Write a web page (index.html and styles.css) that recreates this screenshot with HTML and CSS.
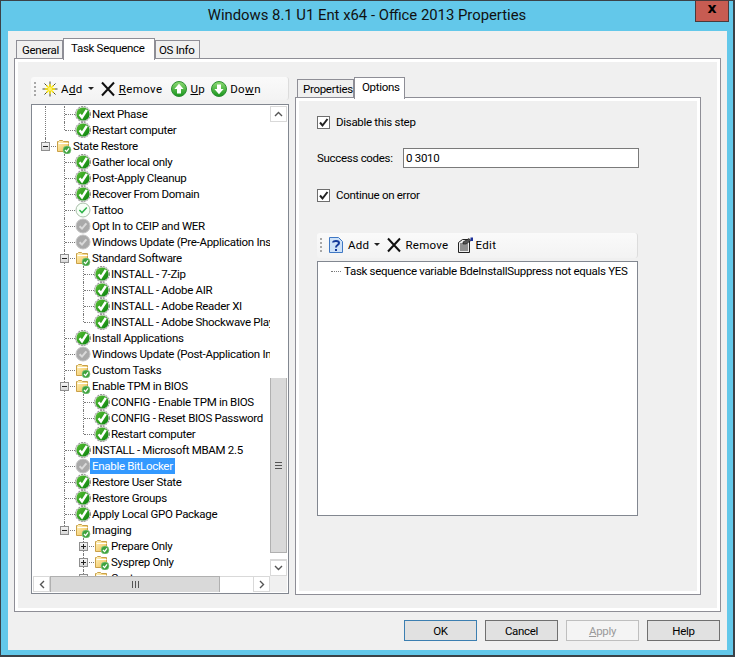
FILE: index.html
```html
<!DOCTYPE html>
<html lang="en">
<head>
<meta charset="utf-8">
<title>Windows 8.1 U1 Ent x64 - Office 2013 Properties</title>
<link rel="stylesheet" href="styles.css">
</head>
<body>
<svg class="defs" width="0" height="0" aria-hidden="true">
  <defs>
    <linearGradient id="gGreen" x1="0" y1="0" x2="1" y2="1"><stop offset="0" stop-color="#5cc236"/><stop offset="1" stop-color="#07800c"/></linearGradient>
    <linearGradient id="gBall" x1="0" y1="0" x2="0" y2="1"><stop offset="0" stop-color="#8fdc74"/><stop offset="1" stop-color="#17941c"/></linearGradient>
    <linearGradient id="gFolder" x1="0" y1="0" x2="1" y2="1"><stop offset="0" stop-color="#fff4c0"/><stop offset="1" stop-color="#f0bd50"/></linearGradient>
    <symbol id="ok" viewBox="0 0 16 16">
      <circle cx="8" cy="8" r="7.5" fill="#e6e6e6" stroke="#868686" stroke-dasharray="2 1"/>
      <circle cx="8" cy="8" r="6.6" fill="url(#gGreen)"/>
      <path d="M4.6 8.2 7 11.4 11.8 3.8" fill="none" stroke="#fff" stroke-width="2.5"/>
    </symbol>
    <symbol id="off" viewBox="0 0 16 16">
      <circle cx="8" cy="8" r="7" fill="#a9a9a9" stroke="#c4c4c4"/>
      <path d="M4.6 8.2 7 10.6 11.4 5.4" fill="none" stroke="#d9d9d9" stroke-width="2"/>
    </symbol>
    <symbol id="plain" viewBox="0 0 16 16">
      <circle cx="8" cy="8" r="7" fill="#f6fff6" stroke="#a8bda8"/>
      <path d="M4.4 8 7 10.6 11.8 5.4" fill="none" stroke="#2fb34a" stroke-width="1.5"/>
    </symbol>
    <symbol id="folder" viewBox="0 0 16 16">
      <path d="M1.5 13.5V3.5h1l1-1h3l1 1h5v10z" fill="url(#gFolder)" stroke="#c9a048"/>
      <path d="M2.5 5.5h10" stroke="#fff" stroke-width="1"/>
      <circle cx="11" cy="12" r="4" fill="#3fa23f" stroke="#8fcf8f" stroke-width=".6"/>
      <path d="M9 12l1.6 1.6L13 10.4" fill="none" stroke="#fff" stroke-width="1.3"/>
    </symbol>
    <symbol id="burst" viewBox="0 0 16 16">
      <path d="M8 .5v15M.5 8h15M2.5 2.5l11 11M13.5 2.5l-11 11" stroke="#4a4a30" stroke-width="1"/>
      <path d="M8 3v10M3 8h10M4.5 4.5l7 7M11.5 4.5l-7 7" stroke="#ffe800" stroke-width="1.4"/>
      <circle cx="8" cy="8" r="2" fill="#fff36a"/>
    </symbol>
    <symbol id="cross" viewBox="0 0 16 16">
      <path d="M2 1.5 14 14.5M14 1.5 2 14.5" stroke="#111" stroke-width="2"/>
    </symbol>
    <symbol id="up" viewBox="0 0 16 16">
      <circle cx="8" cy="8" r="7.5" fill="url(#gBall)" stroke="#2e8f33"/>
      <path d="M8 2.8 12.6 8H10v4.6H6V8H3.4z" fill="#fff"/>
    </symbol>
    <symbol id="down" viewBox="0 0 16 16">
      <circle cx="8" cy="8" r="7.5" fill="url(#gBall)" stroke="#2e8f33"/>
      <path d="M8 13.2 3.4 8H6V3.4h4V8h2.6z" fill="#fff"/>
    </symbol>
    <symbol id="help" viewBox="0 0 16 16">
      <path d="M1.5.5h9l4 4v11h-13z" fill="#cfe2f8" stroke="#3f78c4"/>
      <path d="M5 5.6C5 3.4 11 3.2 11 6c0 2-3 2-3 4.4" fill="none" stroke="#14399a" stroke-width="2"/>
      <path d="M7 12h2v2H7z" fill="#14399a"/>
    </symbol>
    <symbol id="edit" viewBox="0 0 16 16">
      <path d="M1.5 5.5 5.5 2.5h7v13h-11z" fill="#eee" stroke="#222"/>
      <path d="M3 7h8M3 9h8M3 11h8M3 13h8" stroke="#333"/>
      <path d="M6 5 12 1.5l2 2L9 7H6z" fill="#555" stroke="#111" stroke-width=".6"/>
      <path d="M13.5 .5h2.5v3.5h-2.5z" fill="#1a2f9a"/>
    </symbol>
    <symbol id="chev-up" viewBox="0 0 9 6"><path d="M1 5 4.5 1.5 8 5" fill="none" stroke="#555" stroke-width="1.4"/></symbol>
    <symbol id="chev-down" viewBox="0 0 9 6"><path d="M1 1 4.5 4.5 8 1" fill="none" stroke="#555" stroke-width="1.4"/></symbol>
    <symbol id="chev-left" viewBox="0 0 6 9"><path d="M5 1 1.5 4.5 5 8" fill="none" stroke="#555" stroke-width="1.4"/></symbol>
    <symbol id="chev-right" viewBox="0 0 6 9"><path d="M1 1 4.5 4.5 1 8" fill="none" stroke="#555" stroke-width="1.4"/></symbol>
    <symbol id="tick" viewBox="0 0 11 11"><path d="M2 5.5 4.5 8.5 9.5 2" fill="none" stroke="#222" stroke-width="2"/></symbol>
  </defs>
</svg>

<div class="window">
  <header class="titlebar">
    <span class="title">Windows 8.1 U1 Ent x64 - Office 2013 Properties</span>
    <span class="close">x</span>
  </header>

  <div class="client">
    <div class="tabstrip outer-tabs">
      <span class="tab">General</span>
      <span class="tab active">Task Sequence</span>
      <span class="tab">OS Info</span>
    </div>

    <div class="pane outer-pane">
      <div class="pane-fill main-fill">
        <section class="left-col">
          <div class="toolbar">
            <span class="grip"></span>
            <span class="tool t-add"><svg class="ico16"><use href="#burst"/></svg><span>A<u>d</u>d</span></span>
            <span class="caret"></span>
            <span class="tool t-remove"><svg class="ico16"><use href="#cross"/></svg><span><u>R</u>emove</span></span>
            <span class="tool t-up"><svg class="ico16"><use href="#up"/></svg><span><u>U</u>p</span></span>
            <span class="tool t-down"><svg class="ico16"><use href="#down"/></svg><span>Do<u>w</u>n</span></span>
          </div>

          <div class="tree-box">
            <div class="tree-view">
              <ul class="tree root">
                <li>
                  <ul class="tree">
                    <li><div class="row"><i class="slot"></i><svg class="ico"><use href="#ok"/></svg><span class="label">Next Phase</span></div></li>
                    <li><div class="row"><i class="slot"></i><svg class="ico"><use href="#ok"/></svg><span class="label">Restart computer</span></div></li>
                  </ul>
                </li>
                <li>
                  <div class="row"><i class="slot box minus"></i><svg class="ico"><use href="#folder"/></svg><span class="label">State Restore</span></div>
                  <ul class="tree">
                    <li><div class="row"><i class="slot"></i><svg class="ico"><use href="#ok"/></svg><span class="label">Gather local only</span></div></li>
                    <li><div class="row"><i class="slot"></i><svg class="ico"><use href="#ok"/></svg><span class="label">Post-Apply Cleanup</span></div></li>
                    <li><div class="row"><i class="slot"></i><svg class="ico"><use href="#ok"/></svg><span class="label">Recover From Domain</span></div></li>
                    <li><div class="row"><i class="slot"></i><svg class="ico"><use href="#plain"/></svg><span class="label">Tattoo</span></div></li>
                    <li><div class="row"><i class="slot"></i><svg class="ico"><use href="#off"/></svg><span class="label">Opt In to CEIP and WER</span></div></li>
                    <li><div class="row"><i class="slot"></i><svg class="ico"><use href="#off"/></svg><span class="label">Windows Update (Pre-Application Install)</span></div></li>
                    <li>
                      <div class="row"><i class="slot box minus"></i><svg class="ico"><use href="#folder"/></svg><span class="label">Standard Software</span></div>
                      <ul class="tree">
                        <li><div class="row"><i class="slot"></i><svg class="ico"><use href="#ok"/></svg><span class="label">INSTALL - 7-Zip</span></div></li>
                        <li><div class="row"><i class="slot"></i><svg class="ico"><use href="#ok"/></svg><span class="label">INSTALL - Adobe AIR</span></div></li>
                        <li><div class="row"><i class="slot"></i><svg class="ico"><use href="#ok"/></svg><span class="label">INSTALL - Adobe Reader XI</span></div></li>
                        <li><div class="row"><i class="slot"></i><svg class="ico"><use href="#ok"/></svg><span class="label">INSTALL - Adobe Shockwave Player</span></div></li>
                      </ul>
                    </li>
                    <li><div class="row"><i class="slot"></i><svg class="ico"><use href="#ok"/></svg><span class="label">Install Applications</span></div></li>
                    <li><div class="row"><i class="slot"></i><svg class="ico"><use href="#off"/></svg><span class="label">Windows Update (Post-Application Install)</span></div></li>
                    <li><div class="row"><i class="slot"></i><svg class="ico"><use href="#folder"/></svg><span class="label">Custom Tasks</span></div></li>
                    <li>
                      <div class="row"><i class="slot box minus"></i><svg class="ico"><use href="#folder"/></svg><span class="label">Enable TPM in BIOS</span></div>
                      <ul class="tree">
                        <li><div class="row"><i class="slot"></i><svg class="ico"><use href="#ok"/></svg><span class="label">CONFIG - Enable TPM in BIOS</span></div></li>
                        <li><div class="row"><i class="slot"></i><svg class="ico"><use href="#ok"/></svg><span class="label">CONFIG - Reset BIOS Password</span></div></li>
                        <li><div class="row"><i class="slot"></i><svg class="ico"><use href="#ok"/></svg><span class="label">Restart computer</span></div></li>
                      </ul>
                    </li>
                    <li><div class="row"><i class="slot"></i><svg class="ico"><use href="#ok"/></svg><span class="label">INSTALL - Microsoft MBAM 2.5</span></div></li>
                    <li><div class="row"><i class="slot"></i><svg class="ico"><use href="#off"/></svg><span class="label selected">Enable BitLocker</span></div></li>
                    <li><div class="row"><i class="slot"></i><svg class="ico"><use href="#ok"/></svg><span class="label">Restore User State</span></div></li>
                    <li><div class="row"><i class="slot"></i><svg class="ico"><use href="#ok"/></svg><span class="label">Restore Groups</span></div></li>
                    <li><div class="row"><i class="slot"></i><svg class="ico"><use href="#ok"/></svg><span class="label">Apply Local GPO Package</span></div></li>
                    <li>
                      <div class="row"><i class="slot box minus"></i><svg class="ico"><use href="#folder"/></svg><span class="label">Imaging</span></div>
                      <ul class="tree">
                        <li><div class="row"><i class="slot box plus"></i><svg class="ico"><use href="#folder"/></svg><span class="label">Prepare Only</span></div></li>
                        <li><div class="row"><i class="slot box plus"></i><svg class="ico"><use href="#folder"/></svg><span class="label">Sysprep Only</span></div></li>
                        <li><div class="row"><i class="slot box plus"></i><svg class="ico"><use href="#folder"/></svg><span class="label">Custom</span></div></li>
                      </ul>
                    </li>
                  </ul>
                </li>
              </ul>
            </div>

            <div class="vscroll">
              <span class="sb-btn sb-btn-v"><svg class="chev-h"><use href="#chev-up"/></svg></span>
              <span class="sb-track v-before"></span>
              <span class="sb-thumb v-thumb"><i class="grip-h"></i></span>
              <span class="sb-track v-after"></span>
              <span class="sb-btn sb-btn-v"><svg class="chev-h"><use href="#chev-down"/></svg></span>
            </div>
            <div class="hscroll">
              <span class="sb-btn sb-btn-h"><svg class="chev-v"><use href="#chev-left"/></svg></span>
              <span class="sb-thumb h-thumb"><i class="grip-v"></i></span>
              <span class="sb-track h-after"></span>
              <span class="sb-btn sb-btn-h"><svg class="chev-v"><use href="#chev-right"/></svg></span>
            </div>
            <div class="corner"></div>
          </div>
        </section>

        <section class="right-col">
          <div class="tabstrip inner-tabs">
            <span class="tab">Properties</span>
            <span class="tab active">Options</span>
          </div>
          <div class="pane inner-pane">
            <div class="pane-fill options">
              <label class="check-row"><span class="check"><svg class="tick"><use href="#tick"/></svg></span><span>Disable this step</span></label>
              <div class="field-row"><span class="field-label">Success codes:</span><input class="field" type="text" value="0 3010"></div>
              <label class="check-row continue"><span class="check"><svg class="tick"><use href="#tick"/></svg></span><span>Continue on error</span></label>

              <div class="toolbar toolbar-cond">
                <span class="grip"></span>
                <span class="tool c-add"><svg class="ico16"><use href="#help"/></svg><span>Add</span></span>
                <span class="caret"></span>
                <span class="tool c-remove"><svg class="ico16"><use href="#cross"/></svg><span>Remove</span></span>
                <span class="tool c-edit"><svg class="ico16"><use href="#edit"/></svg><span>Edit</span></span>
              </div>
              <div class="cond-list">
                <div class="cond-row"><i class="cond-dots"></i><span>Task sequence variable BdeInstallSuppress not equals YES</span></div>
              </div>
            </div>
          </div>
        </section>
      </div>
    </div>

    <footer class="buttons">
      <button class="btn default" type="button">OK</button>
      <button class="btn" type="button">Cancel</button>
      <button class="btn disabled" type="button"><u>A</u>pply</button>
      <button class="btn" type="button">Help</button>
    </footer>
  </div>
</div>
</body>
</html>
```

FILE: styles.css
```css
* { box-sizing: border-box; }
html, body { margin: 0; padding: 0; }
body {
  width: 735px;
  height: 657px;
  overflow: hidden;
  font-family: Roboto, "Noto Sans", sans-serif;
  font-size: 11.5px;
  letter-spacing: -.3px;
  color: #000;
}
.defs { position: absolute; }

.window {
  width: 735px;
  height: 657px;
  background: #63c8ea;
  border: 1px solid #3b4248;
  border-width: 1px 2px 2px 1px;
  display: flex;
  flex-direction: column;
}

.titlebar {
  height: 30px;
  display: grid;
  grid-template-columns: 1fr auto 1fr;
  flex: none;
}
.title {
  grid-column: 2;
  font-size: 14.85px;
  letter-spacing: 0;
  line-height: 28px;
  color: #111;
  white-space: nowrap;
}
.close {
  grid-column: 3;
  justify-self: end;
  width: 34px;
  height: 22px;
  margin-top: -1px;
  margin-right: 4px;
  background: #c75c52;
  border: 1px solid #4a3a3c;
  text-align: center;
  font-family: "DejaVu Sans", sans-serif;
  font-weight: 700;
  font-size: 14px;
  letter-spacing: 0;
  line-height: 15px;
  color: #000;
}

.client {
  flex: 1;
  margin: 0 6px 5px 7px;
  background: #f0f0f0;
  padding: 7px 6px 0 6px;
  display: flex;
  flex-direction: column;
}

.tabstrip { display: flex; align-items: flex-end; flex: none; }
.outer-tabs { height: 20px; padding-left: 2px; }
.inner-tabs { height: 21px; padding-left: 2px; }
.tab {
  height: 18px;
  padding: 0 5px;
  border: 1px solid #8e8e96;
  border-bottom: 0;
  background: #f0f0f0;
  line-height: 18px;
  white-space: nowrap;
}
.tab.active {
  position: relative;
  z-index: 1;
  height: 22px;
  margin-bottom: -2px;
  background: #fff;
  line-height: 19px;
  padding: 0 7px;
}
.outer-tabs .tab:nth-child(1) { width: 47px; }
.outer-tabs .tab:nth-child(2) { width: 92px; }
.outer-tabs .tab:nth-child(3) { width: 45px; padding-left: 3px; }
.inner-tabs .tab:nth-child(1) { width: 57px; }
.inner-tabs .tab:nth-child(2) { width: 51px; }

.pane {
  background: #fff;
  border: 1px solid #8e8e96;
  padding: 3px;
}
.outer-pane { height: 554px; flex: none; }
.pane-fill { background: #f0f0f0; height: 100%; }

.main-fill {
  display: flex;
  padding: 15px 16px 13px 13px;
  gap: 6px;
}

.left-col { width: 258px; display: flex; flex-direction: column; gap: 4px; }
.right-col { width: 406px; display: flex; flex-direction: column; margin-top: -1px; }
.inner-pane { height: 498px; flex: none; }

.toolbar {
  height: 23px;
  flex: none;
  display: flex;
  align-items: center;
  background: linear-gradient(#fafafa, #f3f3f3);
  border-radius: 3px;
  border-right: 1px solid #dcdcdc;
  padding-left: 3px;
}
.grip {
  width: 2px;
  height: 14px;
  margin-right: 6px;
  background: repeating-linear-gradient(#a8a8a8 0 2px, transparent 2px 4px);
}
.tool { display: flex; align-items: center; gap: 3px; white-space: nowrap; letter-spacing: .4px; }
.ico16 { width: 16px; height: 16px; flex: none; }
.caret {
  width: 0;
  height: 0;
  margin-left: 5px;
  border: 3px solid transparent;
  border-top: 3px solid #222;
  border-bottom: 0;
}
.t-remove { margin-left: 6px; }
.t-up { margin-left: 9px; }
.t-down { margin-left: 6px; }

.tree-box {
  height: 490px;
  background: #fff;
  border: 1px solid #828790;
  padding: 1px;
  display: grid;
  grid-template-columns: 237px 17px;
  grid-template-rows: 470px 16px;
}
.tree-view { overflow: hidden; }

.tree { list-style: none; margin: 0; padding: 0 0 0 19px; white-space: nowrap; }
.tree.root { padding-left: 8px; }
.tree li { position: relative; }
.tree li::before {
  content: "";
  position: absolute;
  left: 4px;
  top: 0;
  bottom: 0;
  border-left: 1px dotted #7a7a7a;
}
.tree li:last-child::before { bottom: auto; height: 8px; }
.row {
  position: relative;
  height: 16px;
  display: flex;
  align-items: center;
}
.row::before {
  content: "";
  position: absolute;
  left: 5px;
  top: 8px;
  width: 10px;
  border-top: 1px dotted #7a7a7a;
}
.slot { display: block; width: 9px; height: 9px; flex: none; margin-right: 6px; position: relative; }
.box {
  background: linear-gradient(#f4f4f4, #d8d8d8);
  border: 1px solid #8f8f8f;
}
.box::before {
  content: "";
  position: absolute;
  left: 1px;
  right: 1px;
  top: 3px;
  height: 1px;
  background: #222;
}
.plus::after {
  content: "";
  position: absolute;
  top: 1px;
  bottom: 1px;
  left: 3px;
  width: 1px;
  background: #222;
}
.ico { width: 16px; height: 16px; flex: none; margin-right: -1px; position: relative; }
.label { padding: 0 2px; line-height: 16px; height: 16px; position: relative; }
.selected { background: #3399ff; color: #fff; }

.vscroll {
  display: flex;
  flex-direction: column;
  background: #fff;
}
.sb-btn {
  display: flex;
  align-items: center;
  justify-content: center;
  flex: none;
  background: #fff;
  border: 1px solid #d9d9d9;
}
.sb-btn-v { height: 16px; }
.sb-btn-h { width: 17px; }
.chev-h { width: 9px; height: 6px; }
.chev-v { width: 6px; height: 9px; }
.sb-track { display: block; background: #fff; }
.v-before { height: 256px; flex: none; }
.v-after { height: 7px; flex: none; border-bottom: 1px solid #d9d9d9; }
.sb-thumb {
  display: flex;
  align-items: center;
  justify-content: center;
  background: #d9d9d9;
  border: 1px solid #b0b0b0;
  flex: none;
}
.v-thumb { height: 175px; border-width: 0 1px 1px; }
.h-thumb { width: 170px; border-width: 1px 1px 0; }
.grip-h {
  width: 7px;
  height: 7px;
  background: repeating-linear-gradient(#555 0 1px, transparent 1px 3px);
}
.grip-v {
  width: 7px;
  height: 7px;
  background: repeating-linear-gradient(90deg, #555 0 1px, transparent 1px 3px);
}
.hscroll { display: flex; background: #fff; }
.h-after { width: 33px; flex: none; border-top: 1px solid #d9d9d9; }
.corner { background: #f0f0f0; }

.options { padding: 13px 18px 0; }
.check-row { display: flex; align-items: center; height: 16px; gap: 6px; }
.check {
  width: 13px;
  height: 13px;
  background: #fff;
  border: 1px solid #6e6e6e;
  display: flex;
  align-items: center;
  justify-content: center;
}
.tick { width: 11px; height: 11px; }
.field-row { display: flex; align-items: center; height: 20px; margin-top: 18px; }
.field-label { width: 86px; flex: none; }
.field {
  width: 236px;
  height: 20px;
  border: 1px solid #7a7a7a;
  padding: 0 2px;
  font: inherit;
  letter-spacing: inherit;
  color: #000;
  background: #fff;
  outline: 0;
}
.continue { margin-top: 19px; }
.toolbar-cond { height: 25px; width: 321px; margin-top: 30px; padding-bottom: 2px; }
.toolbar-cond .tool { letter-spacing: .3px; }
.toolbar-cond .c-add { gap: 4px; }
.c-remove { margin-left: 6px; }
.c-edit { margin-left: 8px; }
.cond-list {
  width: 321px;
  height: 255px;
  margin-top: 3px;
  background: #fff;
  border: 1px solid #828790;
  padding: 1px 0 0 13px;
}
.cond-row { display: flex; align-items: center; height: 16px; white-space: nowrap; }
.cond-dots { width: 10px; flex: none; border-top: 1px dotted #7a7a7a; margin-right: 3px; }

.buttons {
  display: flex;
  justify-content: flex-end;
  gap: 8px;
  margin-top: 8px;
  padding-right: 1px;
}
.btn {
  width: 73px;
  height: 21px;
  padding: 0;
  border: 1px solid #707070;
  background: #e1e1e1;
  font: inherit;
  letter-spacing: inherit;
  color: #000;
}
.btn.default { border-color: #3c7fb1; }
.btn.disabled { border-color: #bfbfbf; background: #f4f4f4; color: #9a9a9a; }
```
